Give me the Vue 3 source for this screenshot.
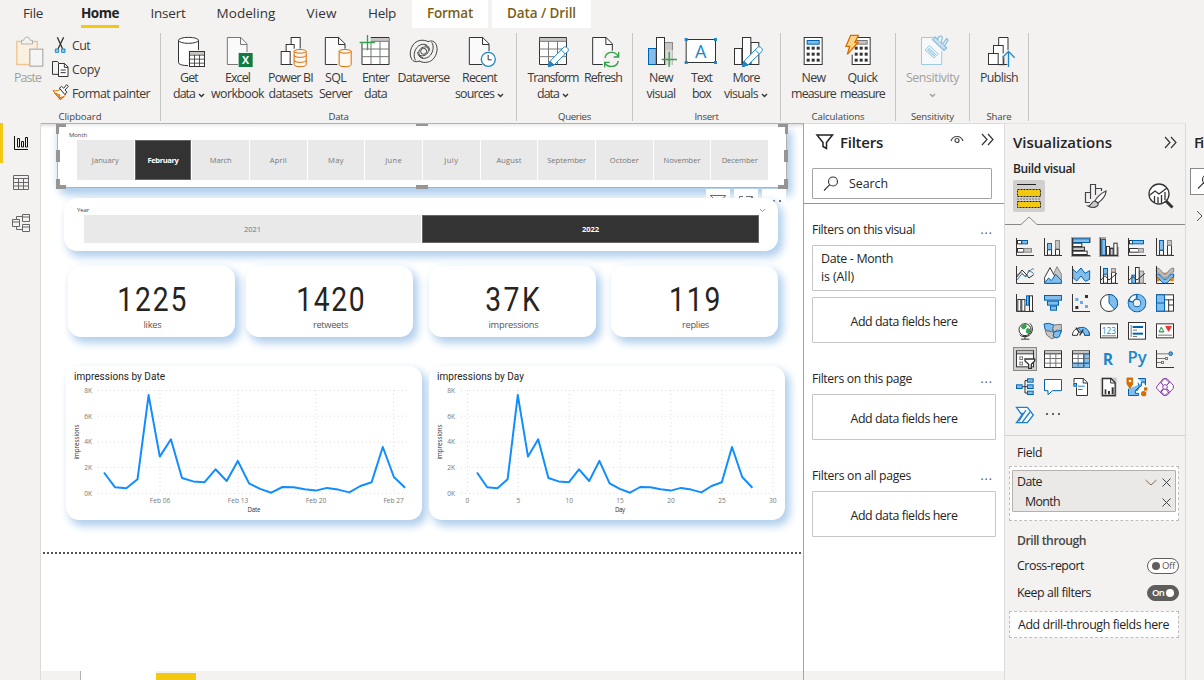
<script setup>
// Sets letter-spacing so a label takes the given width in pixels.
const vFit = {
  mounted(el, { value }) {
    const w = el.getBoundingClientRect().width
    el.style.letterSpacing = (value - w) / el.textContent.length + 'px'
  }
}

const K = '#333', GR = '#c8c6c4', MID = '#777', B = '#83bdec', DB = '#0063b1', SB = '#1b87c9', OR = '#d86c00', GN = '#35a04a'
const r = (x, y, w, h, fill = 'none', stroke = K, sw = 3) =>
  `<rect x="${x + 1.5}" y="${y + 1.5}" width="${w - 3}" height="${h - 3}" fill="${fill}" stroke="${stroke}" stroke-width="${sw}"/>`
const f = (x, y, w, h, fill = K) => `<rect x="${x}" y="${y}" width="${w}" height="${h}" fill="${fill}"/>`
const p = (d, stroke = K, fill = 'none', sw = 3) => `<path d="${d}" stroke="${stroke}" fill="${fill}" stroke-width="${sw}"/>`
const c = (x, y, rad, fill = 'none', stroke = K, sw = 3) => `<circle cx="${x}" cy="${y}" r="${rad}" fill="${fill}" stroke="${stroke}" stroke-width="${sw}"/>`
const t = (x, y, s, size, fill, weight = 400) =>
  `<text x="${x}" y="${y}" font-size="${size}" font-weight="${weight}" fill="${fill}" text-anchor="middle" font-family="Open Sans, sans-serif">${s}</text>`

const page = (x, s = K) =>
  p(`M${x + 1} 112.5H${x + 41}L${x + 60} 131V193.5H${x + 1}Z`, s, '#fafafa') + p(`M${x + 40.5} 112V133.5H${x + 60}`, s)
const cyl = (x, s = OR) =>
  p(`M${x} 154V194c0 8 36 8 36 0V154`, s, '#fff8f0') +
  `<ellipse cx="${x + 18}" cy="154" rx="18" ry="5.5" fill="#fff8f0" stroke="${s}" stroke-width="3"/>`
const pencil = x =>
  p(`M${x} 200L${x + 5} 184L${x + 46} 142c6-5 18 4 13 12L${x + 17} 195Z`, SB, '#fff') + p(`M${x} 200L${x + 5} 184L${x + 17} 195Z`, SB, SB) + p(`M${x + 39} 150L${x + 50} 161`, SB)
const grid = x =>
  p(`M${x} 112.5H${x + 81}V193.5H${x}Z`, K, '#fff') + f(x + 1, 114, 79, 9, GR) + p(`M${x} 124H${x + 81}M${x} 147H${x + 81}M${x} 170H${x + 81}M${x + 27} 124V193M${x + 54} 124V193`, MID)
const keys = x => [140, 158, 176].map(y => [0, 15, 30].map(d => f(x + d, y, 9, 9)).join('')).join('')

const ribbon = {
  get: p('M535.5 121V188c0 12 60 12 60 0V121', K, '#fff') + '<ellipse cx="565.5" cy="121" rx="30" ry="9" fill="#fff" stroke="#333" stroke-width="3"/>' +
    f(564, 150, 54, 54, '#f3f2f1') + r(567, 153, 48, 48, '#fff') + f(570, 156, 42, 8, GR) + p('M568 165.5H614M568 177.5H614M568 189.5H614M583.5 165V199M598.5 165V199', K, 'none', 2.5),
  excel: page(682, MID) + f(715, 156, 46, 48, '#f3f2f1') + f(717, 159, 42, 42, '#107c41') + t(738, 192, 'X', 32, '#fff', 700),
  pbi: r(873, 111, 30, 84, '#fff') + r(858, 132, 27, 63, '#fff') + r(843, 153, 30, 42, '#fff') + f(878, 146, 46, 56, '#f3f2f1') + cyl(883.5) + p('M883.5 166c0 8 36 8 36 0M883.5 181c0 8 36 8 36 0', OR),
  sql: page(976) + f(1013, 146, 45, 56, '#f3f2f1') + cyl(1018.5),
  enter: grid(1087) + f(1079, 104, 34, 26, '#f3f2f1') + p('M1103.5 105V151M1080 127.5H1126', GN, 'none', 4),
  dataverse: '<g transform="translate(0,1)">' + ['', 'rotate(180 132 153)'].map(a => `<g transform="${a}">` +
    p('M146 124C130 116 110 119 100 134C88 152 90 172 100 181C107 186 115 184 119 182M108 180C99 170 103 140 124 133C140 128 150 140 150 151', '#444') +
    p('M146 143C140 136 122 140 118 152C116 162 122 170 130 173', '#444') + '</g>').join('') + c(132, 153, 9, 'none', '#444') + '</g>',
  recent: page(268) + c(326, 178, 25, '#f3f2f1', 'none') + c(326, 178, 21, '#fff', SB, 4) + p('M325.5 165V179.5H336'),
  transform: grid(478.5) + pencil(505),
  refresh: page(637) + f(668, 152, 50, 52, '#f3f2f1') + p('M675 174C678 153 706 151 715 170M716 156V171H701M715 183C711 203 683 205 674 188M674 202V187H689', GN, 'none', 4),
  visual: r(804, 144, 26, 51, B, DB) + r(852, 126, 27, 69, GR, '#888') + r(828, 111, 27, 84, '#fff') + f(858, 150, 20, 45, '#dcdad8') + p('M867.5 155V201M845 178.5H891', GN, 'none', 4),
  textbox: r(918, 117, 91, 72, '#fff') + [[915, 114], [1003, 114], [915, 183], [1003, 183]].map(([x, y]) => f(x, y, 9, 9, SB)).join('') + t(963, 174, 'A', 54, SB),
  more: r(1062, 144, 25, 51, '#fff') + r(1111, 126, 27, 69, '#fff') + r(1086, 111, 28, 84, '#fff') + pencil(1087),
  measure: r(102, 111, 57, 84, '#fff') + r(111, 120, 39, 14, B, DB) + keys(111),
  quick: r(246, 111, 57, 84, '#fff') + r(255, 120, 39, 14, GR, MID) + keys(255) + f(240, 108, 14, 56, '#f3f2f1') + p('M243 106H266L256 127H265L233 163L240 139H229Z', OR, '#ffd58a', 4),
  sensitivity: p('M489 112.5H454.5V193.5H515V154', '#9cc9e3', '#f5f9fb') + p('M465 150L478 137L505 162L492 174Z', '#9cc9e3') + p('M472 150L478 145L497 163L491 168Z', '#9cc9e3', '#c5e0f0') +
    p('M488 119L495 111L530 144L522 151Z', '#8dc0de', '#cfe5f2', 4) + p('M505 122C500 112 512 103 517 112L513 127M517 133L530 116L534 121L524 136', '#8dc0de', '#f5f9fb', 4),
  publish: p('M686 112.5H714V194H686Z', K, '#fff') + r(669, 135, 32, 60, '#fff') + r(654, 159, 32, 36, '#fff') + f(704, 150, 26, 54, '#f3f2f1') + f(696, 160, 18, 15, '#f3f2f1') + p('M701.5 172V193.5H712', K) + p('M715.5 201V155M697 173L715.5 154L734 173', SB, 'none', 4)
}

const groups = [
  { name: 'Data', w: 20, cls: 'g-data', items: [
    { i: 'get', x: 519, l: [['Get', 18], ['data', 22]], chev: 1 }, { i: 'excel', x: 664, l: [['Excel', 25], ['workbook', 53]] },
    { i: 'pbi', x: 823, l: [['Power BI', 45], ['datasets', 44]] }, { i: 'sql', x: 958, l: [['SQL', 21], ['Server', 33]] },
    { i: 'enter', x: 1078, l: [['Enter', 27], ['data', 23]] }, { i: 'dataverse', x: 82, l: [['Dataverse', 52]] },
    { i: 'recent', x: 250, l: [['Recent', 35], ['sources', 39]], chev: 1 }] },
  { name: 'Queries', w: 33, cls: 'g-queries', items: [
    { i: 'transform', x: 471, l: [['Transform', 51], ['data', 22]], chev: 1 }, { i: 'refresh', x: 621, l: [['Refresh', 38]] }] },
  { name: 'Insert', w: 24, cls: 'g-insert', items: [
    { i: 'visual', x: 795, l: [['New', 24], ['visual', 29]] }, { i: 'textbox', x: 916, l: [['Text', 21], ['box', 19]] },
    { i: 'more', x: 1050, l: [['More', 27], ['visuals', 34]], chev: 1 }] },
  { name: 'Calculations', w: 53, cls: 'g-calc', items: [
    { i: 'measure', x: 82, l: [['New', 24], ['measure', 45]] }, { i: 'quick', x: 229, l: [['Quick', 30], ['measure', 45]] }] },
  { name: 'Sensitivity', w: 43, cls: 'g-sens', items: [{ i: 'sensitivity', x: 438, l: [['Sensitivity', 53]], chev: 2 }] },
  { name: 'Share', w: 25, cls: 'g-share', items: [{ i: 'publish', x: 639, l: [['Publish', 38]] }] }
]

const tabs = [['File', 20], ['Home', 38], ['Insert', 35], ['Modeling', 59], ['View', 30], ['Help', 28], ['Format', 46], ['Data / Drill', 69]]
const months = [['January', 27], ['February', 31], ['March', 22], ['April', 17], ['May', 16], ['June', 17], ['July', 14], ['August', 25], ['September', 39], ['October', 29], ['November', 37], ['December', 36]]
const cards = [['1225', 72, 'likes', 18], ['1420', 71, 'retweets', 35], ['37K', 58, 'impressions', 50], ['119', 54, 'replies', 27]]

const series = [1620, 470, 390, 1090, 7650, 2860, 4210, 1190, 930, 860, 1870, 960, 2520, 780, 340, 50, 490, 470, 310, 210, 420, 290, 70, 570, 860, 3610, 1270, 440]
const yv = v => 127.3 - (v / 8000) * 102.7
const charts = [
  { title: 'impressions by Date', tw: 91, axis: 'Date', aw: 13, x0: 38, step: 11.15, left: 32, right: 284, ax: 188,
    ticks: [['Feb 06', 94], ['Feb 13', 172], ['Feb 20', 250], ['Feb 27', 327.6]] },
  { title: 'impressions by Day', tw: 87, axis: 'Day', aw: 10, x0: 48, step: 10.2, left: 32, right: 348, ax: 191,
    ticks: [['0', 38.4], ['5', 89.3], ['10', 140.2], ['15', 191.1], ['20', 242], ['25', 293], ['30', 343.8]] }
]
const line = ch => series.map((v, i) => `${(ch.x0 + i * ch.step).toFixed(1)},${yv(v).toFixed(1)}`).join(' ')

const ax = p('M1.5 0V52.5H54')
const viz = [
  ax + r(3, 6, 15, 13, '#fff') + r(16, 6, 20, 13, B, DB) + r(3, 30, 21, 14, '#fff') + r(22, 30, 26, 14, GR, '#888'),
  ax + r(9, 33, 15, 20, '#fff') + r(9, 15, 15, 22, B, DB) + r(33, 33, 15, 20, '#fff') + r(33, 6, 15, 28, GR, '#888'),
  f(-3, -3, 60, 60, '#a9a7a5') + f(30, 15, 27, 37, '#f3f2f1') + r(1, 1, 53, 14, B, DB) + r(1, 14, 30, 13, '#fff') + r(1, 26, 38, 13, GR) + r(1, 38, 46, 13, '#fff') + p('M0 52.5H54M1.5 0V54'),
  f(-3, -3, 60, 60, '#a9a7a5') + f(18, -3, 39, 30, '#f3f2f1') + r(4, 3, 14, 50, B, DB) + r(18, 24, 12, 29, '#fff') + r(29, 30, 12, 23, GR) + r(40, 14, 13, 39, '#fff') + p('M1.5 0V52.5H54'),
  ax + r(3, 6, 12, 13, '#fff') + r(12, 6, 36, 13, B, DB) + r(3, 30, 30, 14, '#fff') + r(30, 30, 18, 14, GR, '#888'),
  ax + r(9, 36, 15, 17, '#fff') + r(9, 6, 15, 32, B, DB) + r(33, 20, 15, 33, '#fff') + r(33, 6, 15, 17, GR, '#888'),
  ax + p('M3 42L18 23L30 33L39 12L53 23', SB) + p('M3 27L15 19L27 31L38 19L50 7L53 12', MID) + p('M3 33L18 12L30 24L39 36L53 26'),
  p('M26 30L39 2L52 24V52H26Z', '#888', GR) + p('M2 34L18 5L34 34V52H2Z', K, '#fff') + p('M2 50L14 36L22 44L35 25L52 43V52H2Z', DB, B),
  p('M2 9L14 20L27 6L39 22L53 14V40L40 46L27 30L14 45L2 34Z', DB, B) + ax,
  ax + r(9, 22, 15, 31, '#fff') + r(9, 6, 15, 20, B, DB) + r(33, 18, 15, 35, '#fff') + r(33, 6, 15, 14, GR, '#888') + p('M3 42L15 29L27 42L51 22'),
  ax + r(10, 26, 14, 27, B, DB) + r(33, 14, 15, 39, GR, '#888') + r(21, 3, 14, 50, '#fff') + p('M3 42L15 32L27 42L51 22'),
  f(2, 28, 12, 16, '#e8820c') + f(42, 28, 11, 16, '#e8820c') + f(20, 20, 14, 10, '#e8820c') + p('M1 6C17 6 17 24 27 24S37 6 53 6V18C42 18 38 36 27 36S12 18 1 18Z', '#888', '#bbb') + p('M1 24C14 22 16 40 27 40S40 22 53 24V34C44 32 40 52 27 52S10 32 1 34Z', DB, B) + f(2, 36, 7, 10, '#e8820c') + f(44, 36, 8, 10, '#e8820c') + p('M1.5 0V52.5H54'),
  ax + r(4, 15, 12, 38, '#fff') + r(16, 15, 12, 38, '#fff') + r(24, 18, 8, 17, GR, '#888') + r(30, 4, 10, 31, B, DB) + r(39, 4, 12, 49, '#fff'),
  r(0, 3, 54, 17, B, DB) + r(9, 20, 36, 15, B, DB) + r(18, 35, 21, 15, B, DB),
  ax + f(10, 12, 9, 9, '#61ade8') + f(24, 21, 9, 9, '#61ade8') + f(39, 33, 9, 9, '#61ade8') + f(39, 3, 9, 9) + f(10, 36, 9, 9),
  c(27, 27, 25.5, '#fff') + p('M27 1.5V27L44 46A25.5 25.5 0 0 0 27 1.5Z', DB, B),
  c(27, 27, 19, 'none', DB, 18) + c(27, 27, 19, 'none', B, 13) + p('M27 0V14M0 21L14 24', DB) + p('M25 1.5A25.5 25.5 0 0 0 3 20L15 24A13 13 0 0 1 25 14Z', DB, '#fff'),
  r(0, 1, 54, 52, '#fff') + r(0, 1, 27, 52, B, DB) + p('M0 27H27', DB) + p('M27 17.5H54M38 17V53M38 33H54'),
  c(27, 23, 18, '#fff') + p('M18 10L29 7L31 14L24 21L17 18ZM33 20L43 22L38 35L31 31Z', GN, GN) + p('M42 4C58 20 45 45 27 44C18 44 13 41 11 38M27 44V51M15 51.5H40'),
  p('M0 6L14 4L30 9L25 22L31 31L22 29L4 25Z', DB, B) + p('M30 9L52 7V31L40 23L31 31L26 20Z', MID, GR) + p('M4 25L22 29L31 31V48L22 50L8 39Z', MID, GR) + p('M31 29L52 25L46 44L36 48L27 42Z', DB, B),
  p('M1.5 40C1 10 53 10 52.5 40H38C38 26 16 26 16 40Z', K, '#fff') + p('M18 19C38 10 52 23 52.5 40H38C38 32 33 28 27 28Z', DB, B) + p('M12 17L22 32M23 40L34 22', K, 'none', 4),
  r(0, 4, 54, 45, '#fff') + t(27, 36, '123', 25, SB) + p('M6 41.5H48', MID),
  r(0, 0, 54, 53, '#fff') + f(14, 12, 31, 6, DB) + f(14, 32, 31, 6, DB) + p('M9.5 9V45M15 24.5H27M15 43.5H27', MID),
  r(0, 4, 54, 45, '#fff') + p('M9 30L16 15L24 30Z', GN, GN) + p('M29 13H46L38 28Z', '#e33', '#e33') + p('M13 27H20L16 20Z', '#fff', '#fff', 1) + p('M6 39.5H48', MID),
  r(0, 1, 54, 51, '#fff') + f(3, 4, 48, 6, GR) + p('M0 11.5H54') + r(10, 19, 11, 11, '#fff', MID) + r(10, 35, 11, 11, '#fff', MID) + p('M27 27H56V33L46 43V55H38V43L27 33Z', K, '#fff', 4),
  r(0, 1, 54, 53, '#fff') + f(3, 3, 48, 7, GR) + p('M0 11.5H54') + p('M2 25.5H52M2 39.5H52M18.5 12V52M35.5 12V52', MID),
  r(0, 1, 54, 53, '#fff') + f(35, 12, 17, 40, B) + f(2, 39, 50, 13, B) + f(3, 3, 48, 7, GR) + p('M0 11.5H54') + p('M2 25.5H52M2 39.5H52M18.5 12V52M35.5 12V52', MID) + p('M35.5 12V52M2 39.5H52', DB),
  t(24, 44, 'R', 47, SB, 700),
  t(27, 40, 'Py', 50, SB, 600),
  ax + p('M3 11.5H37M3 25.5H27M3 37.5H16', MID) + c(44, 11, 5.5, '#61ade8', DB) + r(27, 21, 9, 9, '#fff', MID) + r(15, 33, 9, 9, '#fff', MID),
  r(0, 19, 20, 14, B, DB) + p('M20 26H34M27 8V45H34M27 7.5H34') + r(33, 1, 20, 13, B, DB) + r(33, 19, 20, 14, B, DB) + r(33, 38, 20, 13, B, DB),
  p('M1.5 4.5H52.5V38H26L12 50V38H1.5Z', DB, '#fff'),
  p('M13.5 28V52.5H46.5V14L34 1.5H6V14', K, '#fff') + p('M33.5 2V15H46') + p('M18 24.5H38M18 34.5H32', SB) + r(4, 15, 11, 11, B, DB),
  f(2, -1, 48, 58, '#c8c6c4') + p('M7.5 1.5H33L45.5 14V52.5H7.5Z', K, '#fff', 4) + p('M32 2V15H45') + f(14, 34, 5, 15) + f(24, 39, 6, 10) + f(35, 28, 6, 21),
  p('M2 2H52V52H2Z', 'none', '#fff') + p('M30 1.5H52.5V22M1.5 32V52.5H32V46H22V38C38 36 26 28 40 24V12H52', DB, B) + p('M30 14L34 26L22 38', DB) +
    p('M-3 0H14V18L6 31L-3 18Z', OR, OR) + c(6, 9, 4, '#fff', 'none') + f(48, 28, 10, 10, OR) + c(47, 47, 8, OR, 'none'),
  p('M1.5 27L15 10L22 2H33L52 22V31L33 52H22L2 31Z', '#8b3ea8', '#fff') + p('M14 12L38 44M40 12L14 44M27 1L40 14L27 27L14 14ZM27 27L40 40L27 53L14 40Z', '#8b3ea8') + c(27, 27, 7, '#fff', '#8b3ea8'),
  p('M1.5 4H34L52 27L34 50H1.5L18 27Z', '#1b7fd6', '#fff', 4) + p('M30 12L8 46M42 18L18 50M15 22H24', '#1b7fd6', 'none', 4)
]
</script>

<template>
  <div class="app">
    <header class="ribbon">
      <nav class="tabs">
        <div v-for="tb in tabs" :key="tb[0]" class="tab" :class="tb[0].replace(/\W/g, '').toLowerCase()">
          <span v-fit="tb[1]" class="tx">{{ tb[0] }}</span>
        </div>
      </nav>
      <div class="tools">
        <section class="group clip">
          <div class="clipbody">
            <div class="paste">
              <svg width="28" height="32" viewBox="50 105 84 96" fill="none" stroke-width="3">
                <path d="M67 124.5H52.5V193.5H90M98 124.5H113.5V146" stroke="#f0c48e" stroke-width="4" /><path d="M56 128H110V146H91V190H56Z" fill="#fbf0df" />
                <path d="M66.5 132V121H73C75 108 91 108 93 121H99.5V132Z" fill="#f3f2f1" stroke="#b5b3b1" />
                <rect x="91.500" y="147.500" width="39" height="51" fill="#f5f5f5" stroke="#a19f9d" />
              </svg>
              <span v-fit="27" class="tx">Paste</span>
            </div>
            <div class="cliplist">
              <div class="cliprow">
                <svg width="18" height="18" viewBox="0 0 54 54" fill="none" stroke="#333" stroke-width="3"><path d="M16 4L32 39M35 4L18 39" stroke-width="4" /><path d="M10 39H20V49H10ZM29 39H39V49H29Z" stroke="#1b87c9" fill="#9ccdf0" /></svg>
                <span v-fit="18" class="tx">Cut</span>
              </div>
              <div class="cliprow">
                <svg width="18" height="18" viewBox="0 0 54 54" fill="none" stroke="#333" stroke-width="3"><path d="M18 43H1.500V4.500H16L22 10" /><path d="M19.500 10.500H38L48 21V49.500H19.500Z" fill="#fff" /><path d="M37 10V22H48M26 30H41M26 38H41" /></svg>
                <span v-fit="28" class="tx">Copy</span>
              </div>
              <div class="cliprow">
                <svg width="18" height="18" viewBox="0 0 54 54" fill="none" stroke="#333" stroke-width="3"><path d="M3 20C14 22 20 19 25 16L41 33L25 47Z" stroke="#d86c00" fill="#fff" /><path d="M8 27L24 33L20 42L35 38L25 47Z" fill="#f8a24a" stroke="#d86c00" /><path d="M22 12L29 7L35 13L44 2L49 7L39 18L45 25L38 31Z" fill="#fff" /></svg>
                <span v-fit="78" class="tx">Format painter</span>
              </div>
            </div>
          </div>
          <footer><span v-fit="43" class="tx">Clipboard</span></footer>
        </section>
        <section v-for="g in groups" :key="g.name" class="group" :class="g.cls">
          <div class="btns">
            <div v-for="b in g.items" :key="b.i" class="btn">
              <svg width="32" height="32" :viewBox="`${b.x} 105 96 96`" v-html="ribbon[b.i]" />
              <div v-for="(l, n) in b.l" :key="n" class="lab">
                <span v-fit="l[1]" class="tx">{{ l[0] }}</span>
                <svg v-if="b.chev === 1 && n === 1" class="chev" width="7" height="5"><path d="M1 1L3.500 3.500L6 1" /></svg>
              </div>
              <div v-if="b.chev === 2" class="lab"><svg class="chev solo" width="7" height="5"><path d="M1 1L3.500 3.500L6 1" /></svg></div>
            </div>
          </div>
          <footer><span v-fit="g.w" class="tx">{{ g.name }}</span></footer>
        </section>
      </div>
    </header>

    <div class="body">
      <aside class="rail">
        <div class="railitem on"><svg width="18" height="18" fill="none" stroke="#111"><path d="M2.500 2V15.500H16M5.500 13V4.500H7.500V13ZM9.500 13V7.500H11.500V13ZM13.500 13V3.500H15.500V13Z" /></svg></div>
        <div class="railitem"><svg width="18" height="18" fill="none" stroke="#666"><path d="M1.500 1.500H16.500V15.500H1.500ZM1.500 4.500H16.500M1.500 8.500H16.500M1.500 12H16.500M6.500 4V15M11.500 4V15" /></svg></div>
        <div class="railitem"><svg width="20" height="20" fill="none" stroke="#666"><path d="M11.500 1.500H18.500V8.500H11.500ZM11.500 4H18.500M1.500 6.500H8.500V13.500H1.500ZM1.500 9H8.500M11.500 11.500H18.500V18.500H11.500ZM11.500 14H18.500M5.500 6V3.500H11M5.500 14V16.500H11" /></svg></div>
      </aside>

      <main class="canvas">
        <section class="monthcard">
          <i class="h tl" /><i class="h tc" /><i class="h tr" /><i class="h ml" /><i class="h mr" /><i class="h bl" /><i class="h bc" /><i class="h br" />
          <h4><span v-fit="18" class="tx">Month</span></h4>
          <div class="months">
            <div v-for="m in months" :key="m[0]" :class="{ sel: m[0] === 'February' }"><span v-fit="m[1]" class="tx">{{ m[0] }}</span></div>
          </div>
          <div class="vhead">
            <b><svg width="24" height="12" fill="none" stroke="#666"><path d="M4 6.500H20L14 12M5 7L10 12" /></svg></b>
            <b><svg width="24" height="12" fill="none" stroke="#666"><path d="M9 7.500H5.500V12M12 7.500H18.500V12M14 12L18 8" /></svg></b>
            <b><svg width="24" height="16" fill="#666"><path d="M5 11h2v2h-2zM11 11h2v2h-2zM17 11h2v2h-2z" /></svg></b>
          </div>
        </section>

        <section class="card yearcard">
          <h4><span v-fit="12" class="tx">Year</span><svg width="7" height="5" fill="none" stroke="#999"><path d="M1 1L3.500 3.500L6 1" /></svg></h4>
          <div class="years"><div><span v-fit="17" class="tx">2021</span></div><div class="sel"><span v-fit="17" class="tx">2022</span></div></div>
        </section>

        <div class="kpis">
          <section v-for="k in cards" :key="k[2]" class="card kpi">
            <strong v-fit="k[1]" class="tx">{{ k[0] }}</strong>
            <span v-fit="k[3]" class="tx">{{ k[2] }}</span>
          </section>
        </div>

        <div class="charts">
          <section v-for="ch in charts" :key="ch.axis" class="card">
            <svg width="356" height="154">
              <text x="8" y="14" class="ct" :textLength="ch.tw">{{ ch.title }}</text>
              <g class="gl">
                <line v-for="n in 5" :key="n" :x1="ch.left" :x2="ch.right > 300 ? 347 : 344" :y1="yv((n - 1) * 2000)" :y2="yv((n - 1) * 2000)" />
                <line v-for="tk in ch.ticks" :key="tk[0]" :x1="tk[1]" :x2="tk[1]" y1="24" y2="127" />
              </g>
              <g class="al">
                <text v-for="n in 5" :key="n" x="26" :y="yv((n - 1) * 2000) + 2.500" text-anchor="end">{{ (n - 1) * 2 }}K</text>
                <text v-for="tk in ch.ticks" :key="tk[0]" :x="tk[1]" y="137" text-anchor="middle">{{ tk[0] }}</text>
              </g>
              <text class="at" :x="ch.ax" y="146" text-anchor="middle" :textLength="ch.aw">{{ ch.axis }}</text>
              <text class="at" transform="translate(13 76) rotate(-90)" text-anchor="middle" textLength="35">impressions</text>
              <polyline :points="line(ch)" />
            </svg>
          </section>
        </div>
        <div class="pageend" />
        <div class="sheets"><span class="s1" /><span class="s2" /><span class="s3" /></div>
      </main>

      <aside class="filters">
        <div class="fhead">
          <svg width="18" height="16" fill="none" stroke="#222" stroke-width="1.500"><path d="M1 1H16.500L10.500 8.500V14.500L7 12.500V8.500Z" /></svg>
          <h2><span v-fit="43" class="tx">Filters</span></h2>
          <svg class="eye" width="14" height="9" fill="none" stroke="#444" stroke-width="1.200"><path d="M1 6C3 0 11 0 13 6" /><circle cx="7" cy="5.500" r="2" /></svg>
          <svg width="13" height="13" fill="none" stroke="#333" stroke-width="1.200"><path d="M1 1L6 6.500L1 12M7 1L12 6.500L7 12" /></svg>
        </div>
        <div class="search">
          <svg width="16" height="16" fill="none" stroke="#333" stroke-width="1.100"><circle cx="10" cy="5.500" r="4.500" /><path d="M6.800 8.700L1 14.500" /></svg>
          <span v-fit="39" class="tx">Search</span>
        </div>
        <div class="flist">
          <h3><span v-fit="103" class="tx">Filters on this visual</span><em>...</em></h3>
          <div class="fbox left"><span v-fit="72" class="tx">Date - Month</span><span v-fit="33" class="tx">is (All)</span></div>
          <div class="fbox"><span v-fit="107" class="tx">Add data fields here</span></div>
          <h3 class="gap"><span v-fit="100" class="tx">Filters on this page</span><em>...</em></h3>
          <div class="fbox"><span v-fit="107" class="tx">Add data fields here</span></div>
          <h3 class="gap"><span v-fit="99" class="tx">Filters on all pages</span><em>...</em></h3>
          <div class="fbox"><span v-fit="107" class="tx">Add data fields here</span></div>
        </div>
      </aside>

      <aside class="viz">
        <div class="vtitle"><h2><span v-fit="99" class="tx">Visualizations</span></h2>
          <svg width="13" height="13" fill="none" stroke="#333" stroke-width="1.200"><path d="M1 1L6 6.500L1 12M7 1L12 6.500L7 12" /></svg></div>
        <div class="build"><span v-fit="62" class="tx">Build visual</span></div>
        <div class="modes">
          <div class="mode on"><svg width="26" height="26" fill="#f2c811"><path d="M1 1.500H20" stroke="#222" /><rect x="1.500" y="6.500" width="23" height="7" stroke="#222" stroke-dasharray="2 1" /><path d="M1 16H25" stroke="#777" stroke-dasharray="2 1" /><rect x="1.500" y="18.500" width="23" height="6" stroke="#222" stroke-dasharray="2 1" /></svg></div>
          <div class="mode"><svg width="26" height="26" fill="none" stroke="#444" stroke-width="1.200"><path d="M8 19.500H3.500V9.500H8.500M8.500 16V1.500H13.500V12M14 5.500H19.500V8" /><path d="M24 8C19 10 14 15 13 18L16 20C20 17 24 12 24 8Z" fill="#fff" /><path d="M13 18C9 18 10 23 6 23C11 26 17 24 16 20Z" fill="#ccc" /></svg></div>
          <div class="mode"><svg width="26" height="26" fill="none" stroke="#333" stroke-width="1.300"><circle cx="11" cy="11" r="10" fill="#fff" /><path d="M2 12L7 8L11 11L19 5M6.500 19V13M10 20V14M13.500 20V12M17 17V9" /><path d="M18 18L24.500 24.500" stroke-width="3" /></svg></div>
        </div>
        <svg class="caretline" width="180" height="10" fill="none" stroke="#8a8886"><path d="M0 8.500H16L24 1L32 8.500H180" /></svg>
        <div class="vgrid">
          <div v-for="(v, n) in viz" :key="n" :class="{ on: n === 24 }"><svg width="18" height="18" viewBox="0 0 54 54" v-html="v" /></div>
          <div class="dots"><i /><i /><i /></div>
        </div>
        <div class="fields">
          <h5><span v-fit="25" class="tx">Field</span></h5>
          <div class="well">
            <div class="pill">
              <div><span v-fit="25" class="tx">Date</span><svg width="12" height="7" fill="none" stroke="#8a6d4b"><path d="M.5 1L6 6L11.500 1" /></svg><svg width="9" height="9" stroke="#444"><path d="M.5 .5L8.500 8.500M8.500 .5L.5 8.500" /></svg></div>
              <div class="sub"><span v-fit="35" class="tx">Month</span><svg width="9" height="9" stroke="#444"><path d="M.5 .5L8.500 8.500M8.500 .5L.5 8.500" /></svg></div>
            </div>
          </div>
          <h5 class="drill"><span v-fit="69" class="tx">Drill through</span></h5>
          <div class="opt"><span v-fit="67" class="tx">Cross-report</span><div class="tog"><i /><span v-fit="13" class="tx">Off</span></div></div>
          <div class="opt second"><span v-fit="74" class="tx">Keep all filters</span><div class="tog on"><span v-fit="12" class="tx">On</span><i /></div></div>
          <div class="dwell"><span v-fit="151" class="tx">Add drill-through fields here</span></div>
        </div>
      </aside>

      <aside class="next">
        <h2><span class="tx">Fi</span></h2>
        <div class="nsearch"><svg width="16" height="16" fill="none" stroke="#333" stroke-width="1.100"><circle cx="10" cy="5.500" r="4.500" /><path d="M6.800 8.700L1 14.500" /></svg></div>
        <svg class="nchev" width="7" height="12" fill="none" stroke="#555"><path d="M1 1L6 6L1 11" /></svg>
      </aside>
    </div>
  </div>
</template>

<style>
body { background: #f3f2f1; overflow: hidden; }
</style>
<style scoped>
* { box-sizing: border-box; margin: 0; }
.app { width: 1204px; height: 680px; overflow: hidden; display: flex; flex-direction: column; background: #f3f2f1; color: #252423; font: 12.4px/16px "Segoe UI", "Open Sans", "Noto Sans", sans-serif; }
svg { display: block; overflow: visible; flex: none; }
.tx { display: inline-block; white-space: nowrap; flex: none; }
.ribbon { height: 123px; flex: none; }
.tabs { display: grid; grid-template-columns: 66px 69px 66px 90px 61px 60px 76px 99px; height: 28px; font-size: 13.5px; }
.tab { position: relative; display: flex; justify-content: center; align-items: center; height: 28px; padding-bottom: 2px; color: #333; }
.home { font-weight: 700; color: #222; padding-right: 1px; }
.home::after { content: ""; position: absolute; left: 15px; right: 16px; bottom: 0; height: 3px; background: #f2c811; }
.format, .datadrill { background: #fff; color: #7a6017; font-weight: 600; }
.datadrill { margin-left: 4px; width: 99px; }
.tools { display: flex; padding-top: 5px; height: 95px; }
.group { border-right: 1px solid #c8c6c4; height: 88px; display: flex; flex-direction: column; flex: none; color: #3b3a39; }
.group footer { font-size: 9.6px; line-height: 12px; text-align: center; margin-top: auto; color: #444; height: 10px; }
.clip { width: 161px; }
.clipbody { display: flex; }
.paste { width: 52px; padding: 2px 0 0 14px; color: #a19f9d; }
.paste svg { margin: 0 0 3px 2px; }
.cliplist { display: flex; flex-direction: column; gap: 6px; padding-top: 3px; }
.cliprow { display: flex; align-items: center; gap: 2px; height: 18px; }
.cliprow .tx { padding-top: 2px; }
.btns { display: flex; justify-content: center; }
.btn { display: flex; flex-direction: column; align-items: center; padding-top: 2px; }
.btn > svg { margin: 0 1px 3px 0; }
.lab { display: flex; align-items: center; gap: 3px; height: 16px; }
.chev { margin-top: 2px; }
.chev path { fill: none; stroke: #333; stroke-width: 1.4; }
.g-data { width: 356px; }
.g-data .btns { display: grid; grid-template-columns: 46px 51px 55px 35px 45px 51px 61px; padding-left: 5px; justify-content: start; }
.g-queries { width: 116px; }
.g-queries .btns { display: grid; grid-template-columns: 60px 40px; justify-content: start; padding-left: 6px; }
.g-insert { width: 148px; }
.g-insert .btns { display: grid; grid-template-columns: 44px 37px 52px; justify-content: start; padding-left: 6px; }
.g-calc { width: 115px; }
.g-calc .btns { display: grid; grid-template-columns: 49px 49px; }
.g-sens { width: 74px; }
.g-sens .lab { color: #a19f9d; }
.g-sens .chev path { stroke: #a19f9d; }
.g-share { width: 59px; }

.body { display: flex; height: 557px; }
.rail { width: 41px; border-right: 1px solid #dddbd9; flex: none; }
.railitem { height: 40px; display: flex; align-items: center; justify-content: center; }
.railitem.on { border-left: 3px solid #f2c811; padding-right: 3px; }
.railitem svg { margin-right: -1px; }
.canvas { width: 763px; background: #fff; border-right: 1px solid #a6a4a2; border-top: 1px solid #b3b0ad; position: relative; display: flex; flex-direction: column; flex: none; box-shadow: inset 0 4px 4px -3px #ccc; }
.card { background: #fff; border-radius: 13px; box-shadow: 4px 5px 8px 1px #b1cfec; }
.monthcard { position: relative; margin: 0 0 0 16px; width: 730px; height: 64px; border: 1px solid #b3b0ad; border-top: 0; padding: 6px 18px 0 19px; box-shadow: 5px 7px 8px 0 #b1cfec, -3px 4px 8px -3px #cfe1f2; background: linear-gradient(#eee, #fff 4px); flex: none; }
h4 { font-size: 6px; line-height: 10px; font-weight: 400; color: #444; }
.monthcard h4 { margin-left: -8px; }
.months { display: grid; grid-template-columns: repeat(12, 1fr); gap: 1px; height: 40px; }
.months > div, .years > div { background: #e9e9e9; color: #777; font-size: 7.6px; display: flex; align-items: center; justify-content: center; }
.months > .sel, .years > .sel { background: #333; color: #fff; font-weight: 700; box-shadow: inset 0 0 0 1px #666; }
.h { position: absolute; border: 0 solid #979593; width: 10px; height: 10px; }
.tl { left: -2px; top: 0; border-width: 3px 0 0 3px; } .tr { right: -2px; top: 0; border-width: 3px 3px 0 0; }
.bl { left: -2px; bottom: -2px; border-width: 0 0 4px 4px; } .br { right: -2px; bottom: -2px; border-width: 0 4px 4px 0; }
.tc, .bc { left: 358px; width: 12px; height: 2px; background: #979593; top: 0; }
.bc { top: auto; bottom: -2px; height: 4px; }
.ml, .mr { top: 26px; width: 4px; height: 12px; background: #979593; left: -2px; }
.mr { left: auto; right: -2px; }
.vhead { position: absolute; right: 0; top: 65px; display: flex; gap: 4px; }
.vhead b { background: #fff; width: 24px; height: 24px; display: block; }
.yearcard { position: relative; margin: 10px 0 0 23px; width: 714px; height: 53px; padding: 7px 19px 0 20px; flex: none; }
.yearcard h4 { display: flex; justify-content: space-between; margin: 0 -7px; align-items: center; }
.years { display: grid; grid-template-columns: 1fr 1fr; gap: 1px; height: 28px; }
.kpis { display: grid; grid-template-columns: 178px 183px 182px 167px; margin: 15px 0 0 27px; height: 71px; flex: none; }
.kpi { width: 167px; display: flex; flex-direction: column; align-items: center; padding-top: 16px; }
.kpi strong { font: 400 32.5px/36px "DIN", Roboto, sans-serif; color: #252423; transform: scaleX(.87); margin-left: 3px; }
.kpi span { font-size: 9.3px; line-height: 14px; color: #555; margin-left: 2px; }
.charts { display: flex; gap: 7px; margin: 29px 0 0 25px; flex: none; }
.charts .card { width: 356px; height: 154px; }
.ct { font: 10px Roboto, sans-serif; fill: #252423; }
.gl line { stroke: #dcdcdc; stroke-dasharray: 1 3; }
.al { font-size: 6.6px; fill: #777; }
.at { font-size: 6.2px; fill: #333; }
polyline { fill: none; stroke: #118dff; stroke-width: 2; stroke-linejoin: round; }
.pageend { height: 2px; margin: 32px 1px 0 2px; background: repeating-linear-gradient(90deg, #555 0 2px, transparent 2px 4px); flex: none; }
.sheets { margin-top: auto; height: 9px; display: flex; background: #f3f2f1; align-items: flex-end; }
.s1 { width: 40px; border-right: 1px solid #b3b0ad; height: 9px; } .s2 { width: 75px; background: #fff; height: 9px; } .s3 { width: 40px; height: 7px; background: #f2c811; }

.filters { width: 200px; background: #fff; border-top: 1px solid #dddbd9; flex: none; height: 548px; }
.fhead { display: flex; align-items: center; padding: 9px 10px 0 12px; height: 27px; }
.fhead h2 { margin-left: 6px; flex: 1; }
h2 { font-size: 15px; line-height: 16px; font-weight: 600; color: #252423; }
.fhead .eye { margin: -6px 17px 0 0; }
.fhead .eye + svg { margin-top: -5px; }
.search { margin: 17px 12px 0 8px; height: 31px; border: 1px solid #a6a4a2; display: flex; align-items: center; gap: 10px; padding-left: 10px; border-radius: 1px; }
.flist { margin-top: 4px; border-top: 1px solid #979593; padding: 17px 8px 0 8px; }
h3 { display: flex; font-size: 12.2px; font-weight: 400; line-height: 17px; height: 24px; justify-content: space-between; }
h3.gap { margin-top: 27px; }
h3 em { font-style: normal; letter-spacing: 1px; color: #555; padding-right: 3px; }
.fbox { border: 1px solid #c8c6c4; height: 46px; display: flex; align-items: center; justify-content: center; border-radius: 1px; padding-top: 3px; }
.fbox.left { flex-direction: column; align-items: flex-start; padding: 0 0 0 8px; margin-bottom: 6px; gap: 2px; }

.viz { width: 181px; border-left: 1px solid #dddbd9; border-top: 1px solid #e5e3e1; display: flex; flex-direction: column; flex: none; }
.vtitle { display: flex; justify-content: space-between; align-items: center; padding: 9px 8px 0 8px; height: 27px; }
.build { padding: 10px 0 0 8px; font-weight: 600; font-size: 12px; height: 29px; }
.modes { display: flex; gap: 34px; padding-left: 8px; height: 32px; }
.mode { width: 32px; height: 32px; display: flex; align-items: center; justify-content: center; }
.mode.on { background: #d2d0ce; border-radius: 2px; }
.caretline { margin-top: 4px; }
.vgrid { display: grid; grid-template-columns: repeat(6, 28px); grid-auto-rows: 28px; margin: 7px 0 0 6px; height: 202px; }
.vgrid > div { display: flex; align-items: center; justify-content: center; }
.vgrid > .on { background: #d2d0ce; border: 1px solid #8a8886; width: 24px; height: 24px; margin: 2px; }
.vgrid .dots { gap: 4px; height: 26px; }
.dots i { width: 2px; height: 2px; background: #6b6157; }
.fields { border-top: 1px solid #d2d0ce; padding: 9px 6px 0 4px; }
h5 { font-size: 12.2px; font-weight: 400; line-height: 16px; padding-left: 8px; }
.well { margin-top: 5px; border: 1px dashed #c0bebc; background: #fff; height: 55px; padding: 3px 2px; }
.pill { border: 1px solid #b3b0ad; background: #eae9e8; height: 42px; padding: 1px 4px; border-radius: 1px; }
.pill div { display: flex; align-items: center; height: 20px; }
.pill div .tx { margin-right: auto; }
.pill svg { margin-left: 5px; }
.pill .sub { padding-left: 8px; }
h5.drill { font-weight: 600; color: #484644; margin-top: 12px; }
.opt { display: flex; justify-content: space-between; align-items: center; height: 16px; padding-left: 8px; margin-top: 9px; }
.opt.second { margin-top: 11px; }
.tog { width: 32px; height: 16px; border: 1px solid #605e5c; border-radius: 8px; background: #fff; display: flex; align-items: center; gap: 2px; padding: 0 4px; font-size: 9.5px; line-height: 14px; color: #555; }
.tog i { width: 8px; height: 8px; border-radius: 50%; background: #605e5c; flex: none; }
.tog.on { background: #605e5c; color: #fff; font-weight: 600; }
.tog.on i { background: #fff; }
.dwell { margin-top: 10px; height: 27px; border: 1px dashed #c0bebc; background: #fff; display: flex; align-items: center; padding-left: 8px; }

.next { width: 19px; border-left: 1px solid #dddbd9; overflow: hidden; flex: none; }
.next h2 { padding: 11px 0 0 8px; height: 45px; letter-spacing: -2px; }
.nsearch { margin-left: 4px; width: 60px; height: 27px; border: 1px solid #8a8886; background: #fff; padding: 5px 6px; }
.nchev { margin: 15px 0 0 10px; }
</style>
